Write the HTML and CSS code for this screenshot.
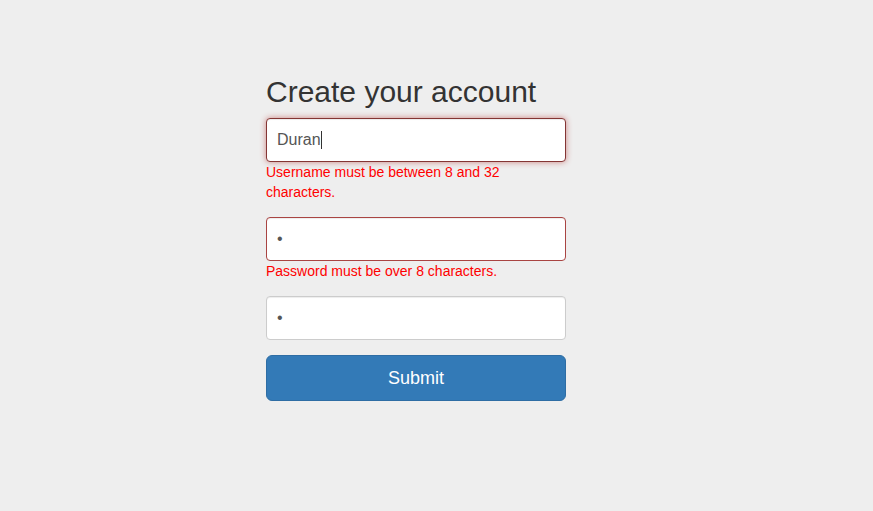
FILE: index.html
```html
<!DOCTYPE html>
<html lang="en">
<head>
<meta charset="utf-8">
<title>Create your account</title>
<link rel="stylesheet" href="styles.css">
</head>
<body>
<main class="page">
  <form class="signup">
    <h2 class="title">Create your account</h2>
    <div class="group">
      <div class="field-wrap">
        <input class="field field-error field-focus" type="text" value="Duran" aria-label="Username">
        <span class="caret"></span>
      </div>
      <div class="error">Username must be between 8 and 32 characters.</div>
    </div>
    <div class="group">
      <input class="field field-error" type="password" value="a" aria-label="Password">
      <div class="error">Password must be over 8 characters.</div>
    </div>
    <div class="group">
      <input class="field" type="password" value="a" aria-label="Confirm password">
    </div>
    <button class="submit" type="button">Submit</button>
  </form>
</main>
</body>
</html>
```
FILE: styles.css
```css
* { box-sizing: border-box; }
html, body {
  margin: 0;
  padding: 0;
  background: #eeeeee;
  font-family: "Liberation Sans", Arial, Helvetica, sans-serif;
  color: #333333;
}
.page {
  display: flex;
  justify-content: center;
  padding-top: 55px;
  padding-right: 41px;
}
.signup {
  width: 300px;
  display: flex;
  flex-direction: column;
}
.title {
  margin: 20px 0 10px;
  font-size: 30px;
  font-weight: normal;
  line-height: 33px;
  color: #333333;
}
.group {
  margin-bottom: 15px;
  display: flex;
  flex-direction: column;
}
.field-wrap {
  position: relative;
}
.field {
  display: block;
  width: 300px;
  height: 44px;
  padding: 10px 10px;
  font-family: "Liberation Sans", Arial, Helvetica, sans-serif;
  font-size: 16px;
  color: #555555;
  background: #ffffff;
  border: 1px solid #cccccc;
  border-radius: 4px;
  box-shadow: inset 0 1px 1px rgba(0,0,0,.075);
  outline: none;
}
.field-error {
  border-color: #a94442;
}
.field-focus {
  border-color: #843534;
  box-shadow: inset 0 1px 1px rgba(0,0,0,.075), 0 0 6px #ce8483;
}
.caret {
  position: absolute;
  left: 55px;
  top: 13px;
  width: 1px;
  height: 18px;
  background: #333333;
}
.error {
  color: #ff0000;
  font-size: 14px;
  line-height: 20px;
}
.submit {
  height: 46px;
  width: 300px;
  background: #337ab7;
  border: 1px solid #2e6da4;
  border-radius: 6px;
  color: #ffffff;
  font-family: "Liberation Sans", Arial, Helvetica, sans-serif;
  font-size: 18px;
  cursor: pointer;
}
```
